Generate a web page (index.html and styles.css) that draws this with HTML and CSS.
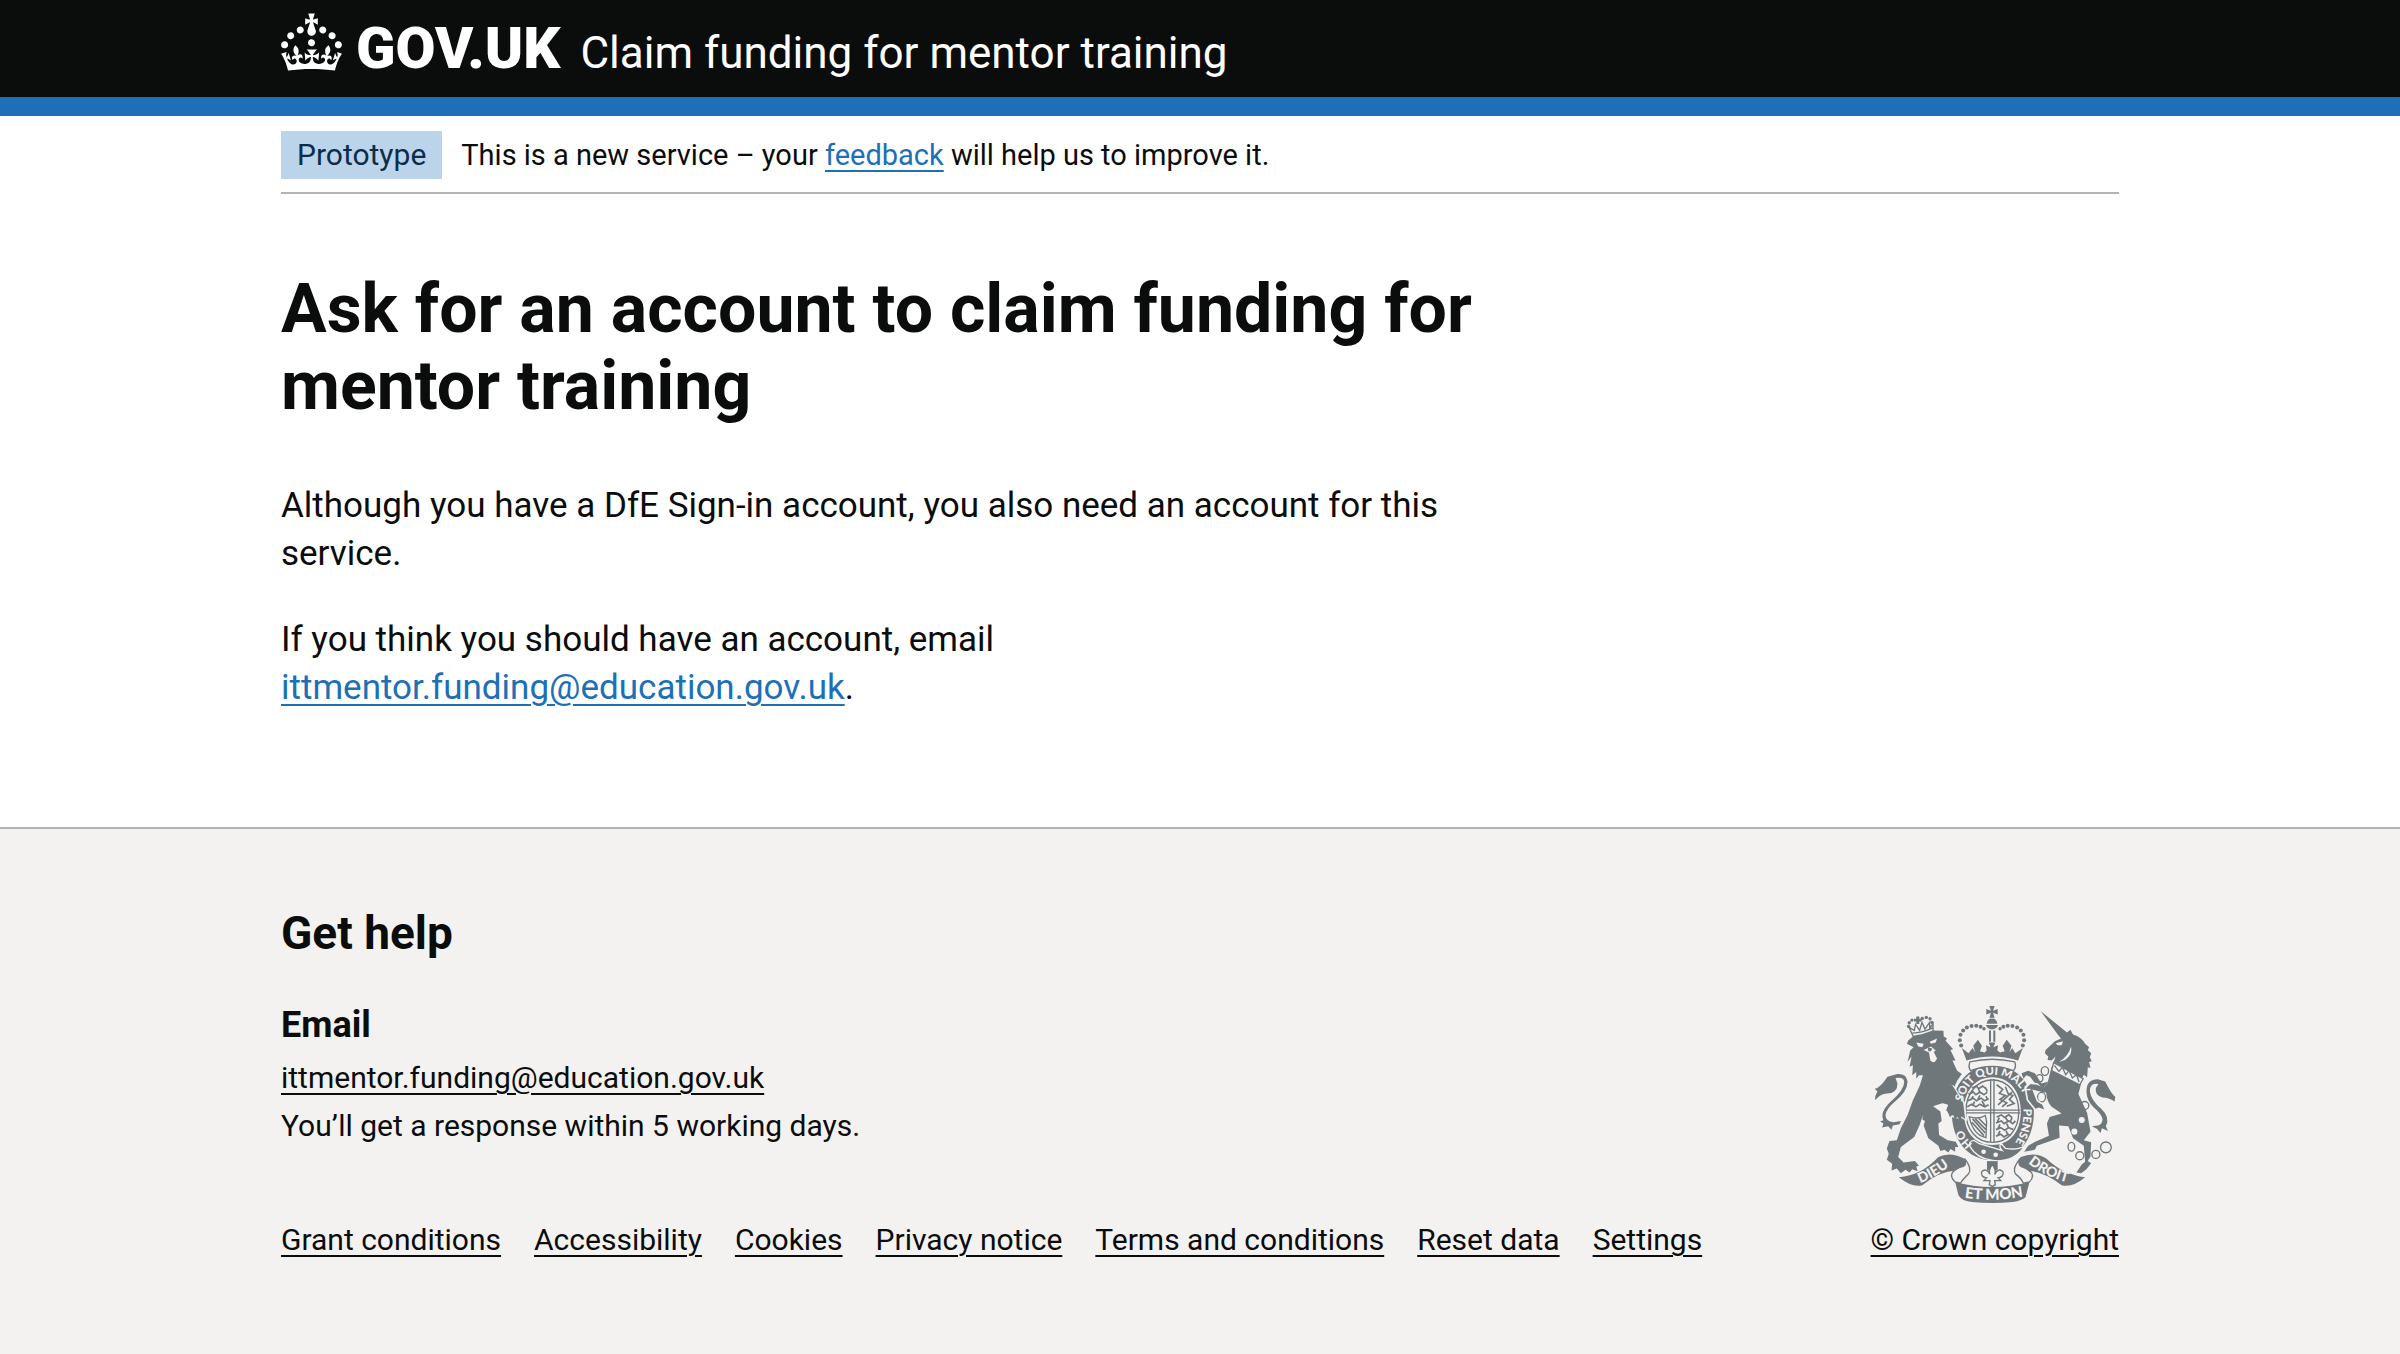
FILE: index.html
```html
<!DOCTYPE html>
<html lang="en">
<head>
<meta charset="utf-8">
<meta name="viewport" content="width=device-width, initial-scale=1">
<title>Ask for an account to claim funding for mentor training</title>
<link rel="stylesheet" href="styles.css">
</head>
<body>
<header class="header">
  <div class="container header-inner">
    <a class="logo" href="#">
      <svg class="crown" viewBox="0 0 32 30" aria-hidden="true"><path fill="currentColor" d="M22.6 10.4c-1 .4-2-.1-2.4-1-.4-.9.1-2 1-2.4.9-.4 2 .1 2.4 1s-.1 2-1 2.4m-5.9 6.7c-.9.4-2-.1-2.4-1-.4-.9.1-2 1-2.4.9-.4 2 .1 2.4 1s-.1 2-1 2.4m10.8-3.7c-1 .4-2-.1-2.4-1-.4-.9.1-2 1-2.4.9-.4 2 .1 2.4 1s0 2-1 2.4m3.3 4.8c-1 .4-2-.1-2.4-1-.4-.9.1-2 1-2.4.9-.4 2 .1 2.4 1s-.1 2-1 2.4M17 4.7l2.3 1.2V2.5l-2.3.7-.2-.2.9-3h-3.4l.9 3-.2.2c-.1.1-2.3-.7-2.3-.7v3.4L15 4.7c.1.1.1.2.2.2l-1.3 4c-.1.2-.1.4-.1.6 0 1.1.8 2 1.9 2.2h.7c1-.2 1.9-1.1 1.9-2.1 0-.2 0-.4-.1-.6l-1.3-4c-.1-.2 0-.2.1-.3m-7.6 5.7c.9.4 2-.1 2.4-1 .4-.9-.1-2-1-2.4-.9-.4-2 .1-2.4 1s0 2 1 2.4m-5 3c.9.4 2-.1 2.4-1 .4-.9-.1-2-1-2.4-.9-.4-2 .1-2.4 1s.1 2 1 2.4m-3.2 4.8c.9.4 2-.1 2.4-1 .4-.9-.1-2-1-2.4-.9-.4-2 .1-2.4 1s0 2 1 2.4m14.8 11c4.4 0 8.6.3 12.3.8 1.1-4.5 2.4-7 3.7-8.8l-2.5-.9c.2 1.3.3 1.9 0 2.7-.4-.4-.8-1.1-1.1-2.3l-1.2 4c.7-.5 1.3-.8 2-.9-1.1 2.5-2.6 3.1-3.5 3-1.1-.2-1.7-1.2-1.5-2.1.3-1.2 1.5-1.5 2.1-.1 1.1-2.3-.8-3-2-2.3 1.9-1.9 2.1-3.5.6-5.6-2.1 1.6-2.1 3.2-1.2 5.5-1.2-1.4-3.2-.6-2.5 1.6.9-1.4 2.1-.5 1.9.8-.2 1.1-1.7 2.1-3.5 1.9-2.7-.2-2.9-2.1-2.9-3.6.7-.1 1.9.5 2.9 1.9l.4-4.3c-1.1 1.1-2.1 1.4-3.2 1.4.4-1.2 2.1-3 2.1-3h-5.4s1.7 1.9 2.1 3c-1.1 0-2.1-.2-3.2-1.4l.4 4.3c1-1.4 2.2-2 2.9-1.9-.1 1.5-.2 3.4-2.9 3.6-1.9.2-3.4-.8-3.5-1.9-.2-1.3 1-2.2 1.9-.8.7-2.3-1.2-3-2.5-1.6.9-2.2.9-3.9-1.2-5.5-1.5 2-1.3 3.7.6 5.6-1.2-.7-3.1 0-2 2.3.6-1.4 1.8-1.1 2.1.1.2.9-.3 1.9-1.5 2.1-.9.2-2.4-.5-3.5-3 .6 0 1.2.3 2 .9l-1.2-4c-.3 1.1-.7 1.9-1.1 2.3-.3-.8-.2-1.4 0-2.7l-2.9.9C1.3 23 2.6 25.5 3.7 30c3.7-.5 7.9-.8 12.3-.8"/></svg>
      <span class="logo-text">GOV.UK</span>
    </a>
    <a class="service-name" href="#">Claim funding for mentor training</a>
  </div>
</header>

<div class="container">
  <div class="phase-banner">
    <strong class="tag">Prototype</strong>
    <span class="phase-text">This is a new service – your <a class="link" href="#">feedback</a> will help us to improve it.</span>
  </div>
  <main class="main">
    <h1 class="heading-xl">Ask for an account to claim funding for mentor training</h1>
    <p class="body-text">Although you have a DfE Sign-in account, you also need an account for this service.</p>
    <p class="body-text">If you think you should have an account, email <a class="link" href="mailto:ittmentor.funding@education.gov.uk">ittmentor.funding@education.gov.uk</a>.</p>
  </main>
</div>

<footer class="footer">
  <div class="container footer-inner">
    <div class="footer-main">
      <h2 class="heading-m">Get help</h2>
      <h3 class="heading-s">Email</h3>
      <ul class="contact">
        <li><a class="footer-link" href="mailto:ittmentor.funding@education.gov.uk">ittmentor.funding@education.gov.uk</a></li>
        <li>You’ll get a response within 5 working days.</li>
      </ul>
      <ul class="footer-links">
        <li><a class="footer-link" href="#">Grant conditions</a></li>
        <li><a class="footer-link" href="#">Accessibility</a></li>
        <li><a class="footer-link" href="#">Cookies</a></li>
        <li><a class="footer-link" href="#">Privacy notice</a></li>
        <li><a class="footer-link" href="#">Terms and conditions</a></li>
        <li><a class="footer-link" href="#">Reset data</a></li>
        <li><a class="footer-link" href="#">Settings</a></li>
      </ul>
    </div>
    <a class="footer-link copyright" href="#">
      <svg class="crest" viewBox="70 42 722 594" aria-hidden="true">
        <defs>
          <path id="honi" d="M364 458Q328 424 326 372"/>
          <path id="garter" d="M334 332C348 278 380 250 423 250C479 250 518 286 529 350"/>
          <path id="pense" d="M516 352Q519 420 478 472"/>
          <path id="dieu" d="M208 574Q258 554 304 516"/>
          <path id="mon" d="M340 617Q422 630 506 616"/>
          <path id="droit" d="M530 514Q584 558 658 574"/>
        </defs>
        <!-- lion -->
        <g class="ink">
          <path d="M186 136Q214 132 246 118L277 119L278 136L288 142L283 148L306 174L298 176L313 208L304 208L318 238L332 248L318 268L308 290L336 336L342 382L331 374L330 386L318 376L312 384L306 370L296 376L294 362L285 356L292 340L278 334L246 344L268 360L272 388L262 396L264 430L290 446L314 450L322 466L312 466L312 480L298 472L292 482L280 474L268 478L262 462L232 440L218 402L222 388L214 384L216 370L206 400L190 436L150 466L142 496L158 512L192 508L204 522L196 524L200 538L184 532L176 542L164 534L150 544L138 530L122 536L124 516L108 504L114 486L108 470L116 448L138 446L150 410L170 370L186 326L206 284L216 252L204 252L196 262L196 242L184 252L186 222L176 226L182 196L170 212L178 178L188 168L168 158L172 148Z"/>
          <path d="M170 270Q166 246 140 248L110 256Q88 290 72 292L80 300Q72 312 73 326Q90 306 108 306Q140 306 140 276L134 260Q160 256 160 272Q160 296 120 330Q86 362 98 386L88 390L98 396L94 408L112 404L122 414L126 402L146 398L150 388L128 392Q104 388 104 370Q108 350 130 332Q170 300 170 270Z"/>
        </g>
        <path class="collar" d="M187 136L174 108L190 118L194 100L206 118L213 94L222 114L236 94L236 112L246 98L246 120Q216 132 187 136Z"/>
        <path class="line" d="M184 126Q216 124 246 110"/>
        <path class="ink" d="M196 76h9v7h7v8h-7v8h-9v-8h-7v-8h7z"/>
        <g class="beads">
          <circle cx="173" cy="106" r="5"/><circle cx="175" cy="95" r="5"/><circle cx="183" cy="87" r="5"/><circle cx="214" cy="82" r="5"/><circle cx="226" cy="79" r="5"/><circle cx="237" cy="83" r="5"/><circle cx="243" cy="94" r="5"/>
        </g>
        <path class="paper" d="M196 154L218 158L214 168L202 166ZM236 152L258 142L254 154L240 158ZM218 176L240 166L254 178L248 182L258 202Q250 220 238 208L234 184Z"/>
        <path class="ink" d="M230 168L244 172L240 180L232 180Z"/>
        <!-- unicorn -->
        <g class="ink">
          <path d="M567 60L646 124L656 116L664 130Q690 138 700 158L712 168L708 176L718 186L714 198L720 210L712 212L716 230L708 228L706 258L696 250L690 262L606 212L612 196L600 208L588 206L590 196L580 186L582 176L610 150L628 142L620 132Z"/>
          <path d="M600 226L688 276L680 308L706 364L716 420L696 446L718 452L716 494L708 508L718 514L704 532L688 544L674 542L690 518L700 510L696 462L664 440L650 404L622 402L624 438L556 462L550 474L518 480L530 462L548 452L592 432L586 396L594 376L630 366L600 346Q586 330 584 306L574 292L588 274Z"/>
          <path d="M590 270L570 276L550 246L530 238L510 246L516 262L524 252L536 256L552 278L574 292Z"/>
          <path d="M704 300Q704 264 738 264L760 270Q780 310 790 316L788 330Q770 318 752 318Q728 312 732 290L740 278Q714 272 714 300Q718 326 748 352Q776 378 762 404L768 418L750 410L746 424L736 412L720 404L738 402Q752 398 752 382Q748 366 726 348Q704 326 704 300Z"/>
        </g>
        <path class="paper" d="M612 156L634 150L630 162L618 162ZM658 166Q664 190 640 206L622 212Q650 196 658 166Z"/>
        <path class="collar" d="M606 214L694 262L684 280L600 238Z"/>
        <path class="line" d="M608 222L622 240L632 228L642 250L652 238L662 260L674 250L682 272"/>
        <g class="chain">
          <ellipse cx="580" cy="239" rx="11" ry="13"/><ellipse cx="564" cy="261" rx="10" ry="11"/><ellipse cx="570" cy="317" rx="12" ry="14"/><circle cx="699" cy="342" r="12"/><ellipse cx="659" cy="465" rx="10" ry="13"/><circle cx="684" cy="492" r="12"/><circle cx="732" cy="488" r="12"/><circle cx="762" cy="467" r="16"/>
        </g>
        <circle class="paper" cx="690" cy="385" r="9"/><circle class="paper" cx="668" cy="420" r="9"/>
        <!-- garter, shield and motto -->
        <path class="ink" fill-rule="evenodd" d="M423 222C500 222 547 282 547 362C547 445 500 505 423 505C350 505 302 445 302 362C302 282 350 222 423 222ZM423 258C370 258 338 302 338 360C338 420 370 460 423 460C476 460 508 420 508 360C508 302 476 258 423 258Z"/>
        <path class="line" d="M423 266C376 266 344 308 344 360C344 414 376 452 423 452C470 452 502 414 502 360C502 308 470 266 423 266ZM418 264V454M428 264V454M340 356H506M340 364H506"/>
        <path class="fine" d="M362 290l14-6 6 8 12-8 8 6M352 308l14-6 8 8 12-8 12 8 10-8M350 328l16-8 10 8 14-8 10 8 12-6M348 346l14-8 12 8 12-8 14 8 12-6M364 296l-6 10M382 294l6 12M402 288l6 12M366 314l-8 12M386 312l-6 12M404 314l6 12M370 330l-6 14M392 328l8 14M436 280l18 14-10 12 18 6-16 12 20 10-14 12M462 286l8 20 14 6-10 12 14 12-22 8M440 340l20-18 22-20M436 376l14-6 10 8 12-8 10 8M434 394l16-6 8 8 14-8 12 8 8-8M434 414l14-6 12 8 12-8 14 6M434 434l14-6 10 8 12-8 8 4M444 378l-6 12M462 378l8 12M482 378l-6 14M446 398l-6 12M466 396l6 14M446 418l-6 12M464 418l6 12"/>
        <path class="line" d="M354 376Q384 384 402 372L406 390L404 438Q366 430 354 376Z"/>
        <path class="fine" d="M364 382l38 42M372 382l32 32M382 380l24 24M362 392l36 40"/>
        <path class="outline-paper" d="M290 284L304 286L336 334L342 380L331 374L318 376L304 372L298 356L300 340Z"/>
        <path class="ink" d="M262 266L304 282L336 334L342 382L331 374L330 386L318 376L312 384L306 370L296 374L287 356L292 340L270 334Z"/>
        <path class="outline-paper" d="M524 288L538 278L556 280L566 290L542 294L556 330L572 340L578 354L562 348L552 352L530 324Z"/>
        <path class="ink" d="M524 288L538 278L556 280L580 290L580 304L542 294L556 330L572 340L578 354L562 348L552 352L530 324Z"/>
        <path class="buckle" d="M356 464Q352 448 368 446L384 456L452 476Q440 462 450 456L462 470Q500 476 520 462Q488 514 424 506Q376 500 356 464Z"/>
        <circle class="paper" cx="397" cy="480" r="7"/><circle class="paper" cx="433" cy="489" r="7"/>
        <g class="motto">
          <text font-size="34"><textPath href="#honi">HO</textPath></text>
          <text font-size="34"><textPath href="#garter">SOIT QUI MALY</textPath></text>
          <text font-size="34"><textPath href="#pense">PENSE</textPath></text>
        </g>
        <!-- royal crown -->
        <g class="ink">
          <path d="M414 45H430L425 59L439 54V70L425 65L430 80H414L419 65L405 70V54L419 59Z"/>
          <path d="M406 98Q408 82 422 82Q436 82 438 98ZM404 102H440Q436 115 422 115Q408 115 404 102Z"/>
          <path d="M413 118h6v34h-6zM426 118h6v34h-6z"/>
          <path d="M332 170L352 186L364 170L372 184L366 164L380 146L392 164L386 180L400 184L406 178L404 162L418 168L412 154H432L426 168L440 162L438 178L446 184L460 180L454 164L466 146L480 164L474 184L482 170L492 186L514 170L500 208Q422 184 346 208Z"/>
        </g>
        <g class="beads">
          <circle cx="330" cy="163" r="6"/><circle cx="326" cy="147" r="6"/><circle cx="328" cy="131" r="6"/><circle cx="336" cy="118" r="6"/><circle cx="347" cy="109" r="6"/><circle cx="361" cy="105" r="6"/><circle cx="375" cy="104" r="6"/><circle cx="388" cy="107" r="6"/><circle cx="398" cy="113" r="5"/>
          <circle cx="514" cy="163" r="6"/><circle cx="518" cy="147" r="6"/><circle cx="516" cy="131" r="6"/><circle cx="508" cy="118" r="6"/><circle cx="497" cy="109" r="6"/><circle cx="483" cy="105" r="6"/><circle cx="469" cy="104" r="6"/><circle cx="456" cy="107" r="6"/><circle cx="446" cy="113" r="5"/>
        </g>
        <path class="collar" d="M356 212Q422 196 490 212Q496 226 486 238Q422 212 358 238Q350 226 356 212Z"/>
        <!-- ribbon -->
        <g class="ink">
          <path d="M144 556Q210 552 262 496Q296 478 338 500L356 530Q328 520 312 536Q262 540 214 580Q184 588 144 556Z"/>
          <path d="M700 556Q634 548 584 500Q550 478 508 496L486 530Q514 520 532 536Q582 542 630 580Q662 588 700 556Z"/>
          <path d="M312 570Q422 600 534 570L522 616Q512 626 484 630Q422 636 362 630Q332 628 322 610Z"/>
          <path d="M407 508h32v28h-32z"/>
        </g>
        <path class="collar" d="M340 500Q364 530 352 546Q334 564 328 574L312 570Q296 556 304 542Q314 530 336 524Q348 518 340 500Z"/>
        <path class="collar" d="M506 500Q482 530 492 546Q510 560 516 574L534 570Q548 556 540 542Q528 530 508 524Q498 518 506 500Z"/>
        <path class="collar" d="M423 518Q410 534 416 548Q404 526 391 540Q388 556 406 558L398 566H416L414 578L423 584L432 578L430 566H448L440 558Q458 556 455 540Q442 526 430 548Q436 534 423 518Z"/>
        <g class="motto">
          <text font-size="42"><textPath href="#dieu">DIEU</textPath></text>
          <text font-size="45"><textPath href="#mon">ET MON</textPath></text>
          <text font-size="42"><textPath href="#droit">DROIT</textPath></text>
        </g>
      </svg>
      <span>© Crown copyright</span>
    </a>
  </div>
</footer>
</body>
</html>
```
FILE: styles.css
```css
* {
  box-sizing: border-box;
}

html {
  background: #f3f2f1;
}

body {
  margin: 0;
  background: #fff;
  color: #0b0c0c;
  font-family: Roboto, "Liberation Sans", sans-serif;
  font-size: 30px;
  line-height: 48px;
}

h1, h2, h3, p, ul {
  margin: 0;
  padding: 0;
}

ul {
  list-style: none;
}

.container {
  max-width: 1838px;
  margin: 0 auto;
}

/* Header */
.header {
  background: #0b0c0c;
  border-bottom: 19px solid #1d70b8;
  color: #fff;
}

.header-inner {
  display: flex;
  align-items: baseline;
  gap: 20px;
  padding: 13px 0 9px;
  line-height: 70px;
}

.logo,
.service-name {
  color: inherit;
  text-decoration: none;
}

.logo {
  display: flex;
  align-items: baseline;
  gap: 14px;
}

.crown {
  width: 61px;
  height: 58px;
  align-self: flex-start;
}

.logo-text {
  font-size: 58px;
  font-weight: 900;
}

.service-name {
  font-size: 44px;
}

/* Phase banner */
.phase-banner {
  display: flex;
  align-items: center;
  gap: 19px;
  padding: 15px 0 13px;
  border-bottom: 2px solid #b1b4b6;
}

.tag {
  padding: 0 16px;
  background: #bbd4ea;
  color: #0c2d4a;
  font-weight: 400;
}

.phase-text {
  font-size: 29px;
}

.link,
.footer-link {
  text-decoration: underline;
  text-decoration-thickness: 2px;
  text-underline-offset: 5px;
}

.link {
  color: #1d70b8;
}

.footer-link {
  color: inherit;
}

/* Content */
.main {
  max-width: 1206px;
  padding: 77px 0 115px;
}

.heading-xl {
  margin-bottom: 57px;
  font-size: 68px;
  line-height: 77px;
}

.body-text {
  font-size: 35px;
}

.body-text + .body-text {
  margin-top: 38px;
}

/* Footer */
.footer {
  padding: 75px 0 90px;
  background: #f3f2f1;
  border-top: 2px solid #b1b4b6;
}

.footer-inner {
  display: flex;
  align-items: flex-end;
  justify-content: space-between;
  gap: 36px;
}

.heading-m {
  margin-bottom: 39px;
  font-size: 46px;
  line-height: 58px;
}

.heading-s {
  margin-bottom: 5px;
  font-size: 36px;
}

.contact {
  margin-bottom: 66px;
}

.footer-links {
  display: flex;
  flex-wrap: wrap;
  column-gap: 33px;
}

.copyright {
  display: flex;
  flex-direction: column;
  align-items: center;
  gap: 12px;
  white-space: nowrap;
}

/* Coat of arms */
.crest {
  width: 242px;
  height: 199px;
}

.ink,
.beads {
  fill: #6f777b;
}

.paper {
  fill: #f3f2f1;
}

.line,
.chain,
.fine {
  fill: none;
  stroke: #6f777b;
  stroke-width: 4;
}

.fine {
  stroke-width: 5;
}

.outline-paper {
  fill: #f3f2f1;
  stroke: #f3f2f1;
  stroke-width: 10;
}

.collar {
  fill: #f3f2f1;
  stroke: #6f777b;
  stroke-width: 4;
}

.buckle {
  fill: #6f777b;
  stroke: #f3f2f1;
  stroke-width: 4;
}

.motto {
  fill: #f3f2f1;
  font-family: Lato, sans-serif;
  font-weight: 900;
}
```
